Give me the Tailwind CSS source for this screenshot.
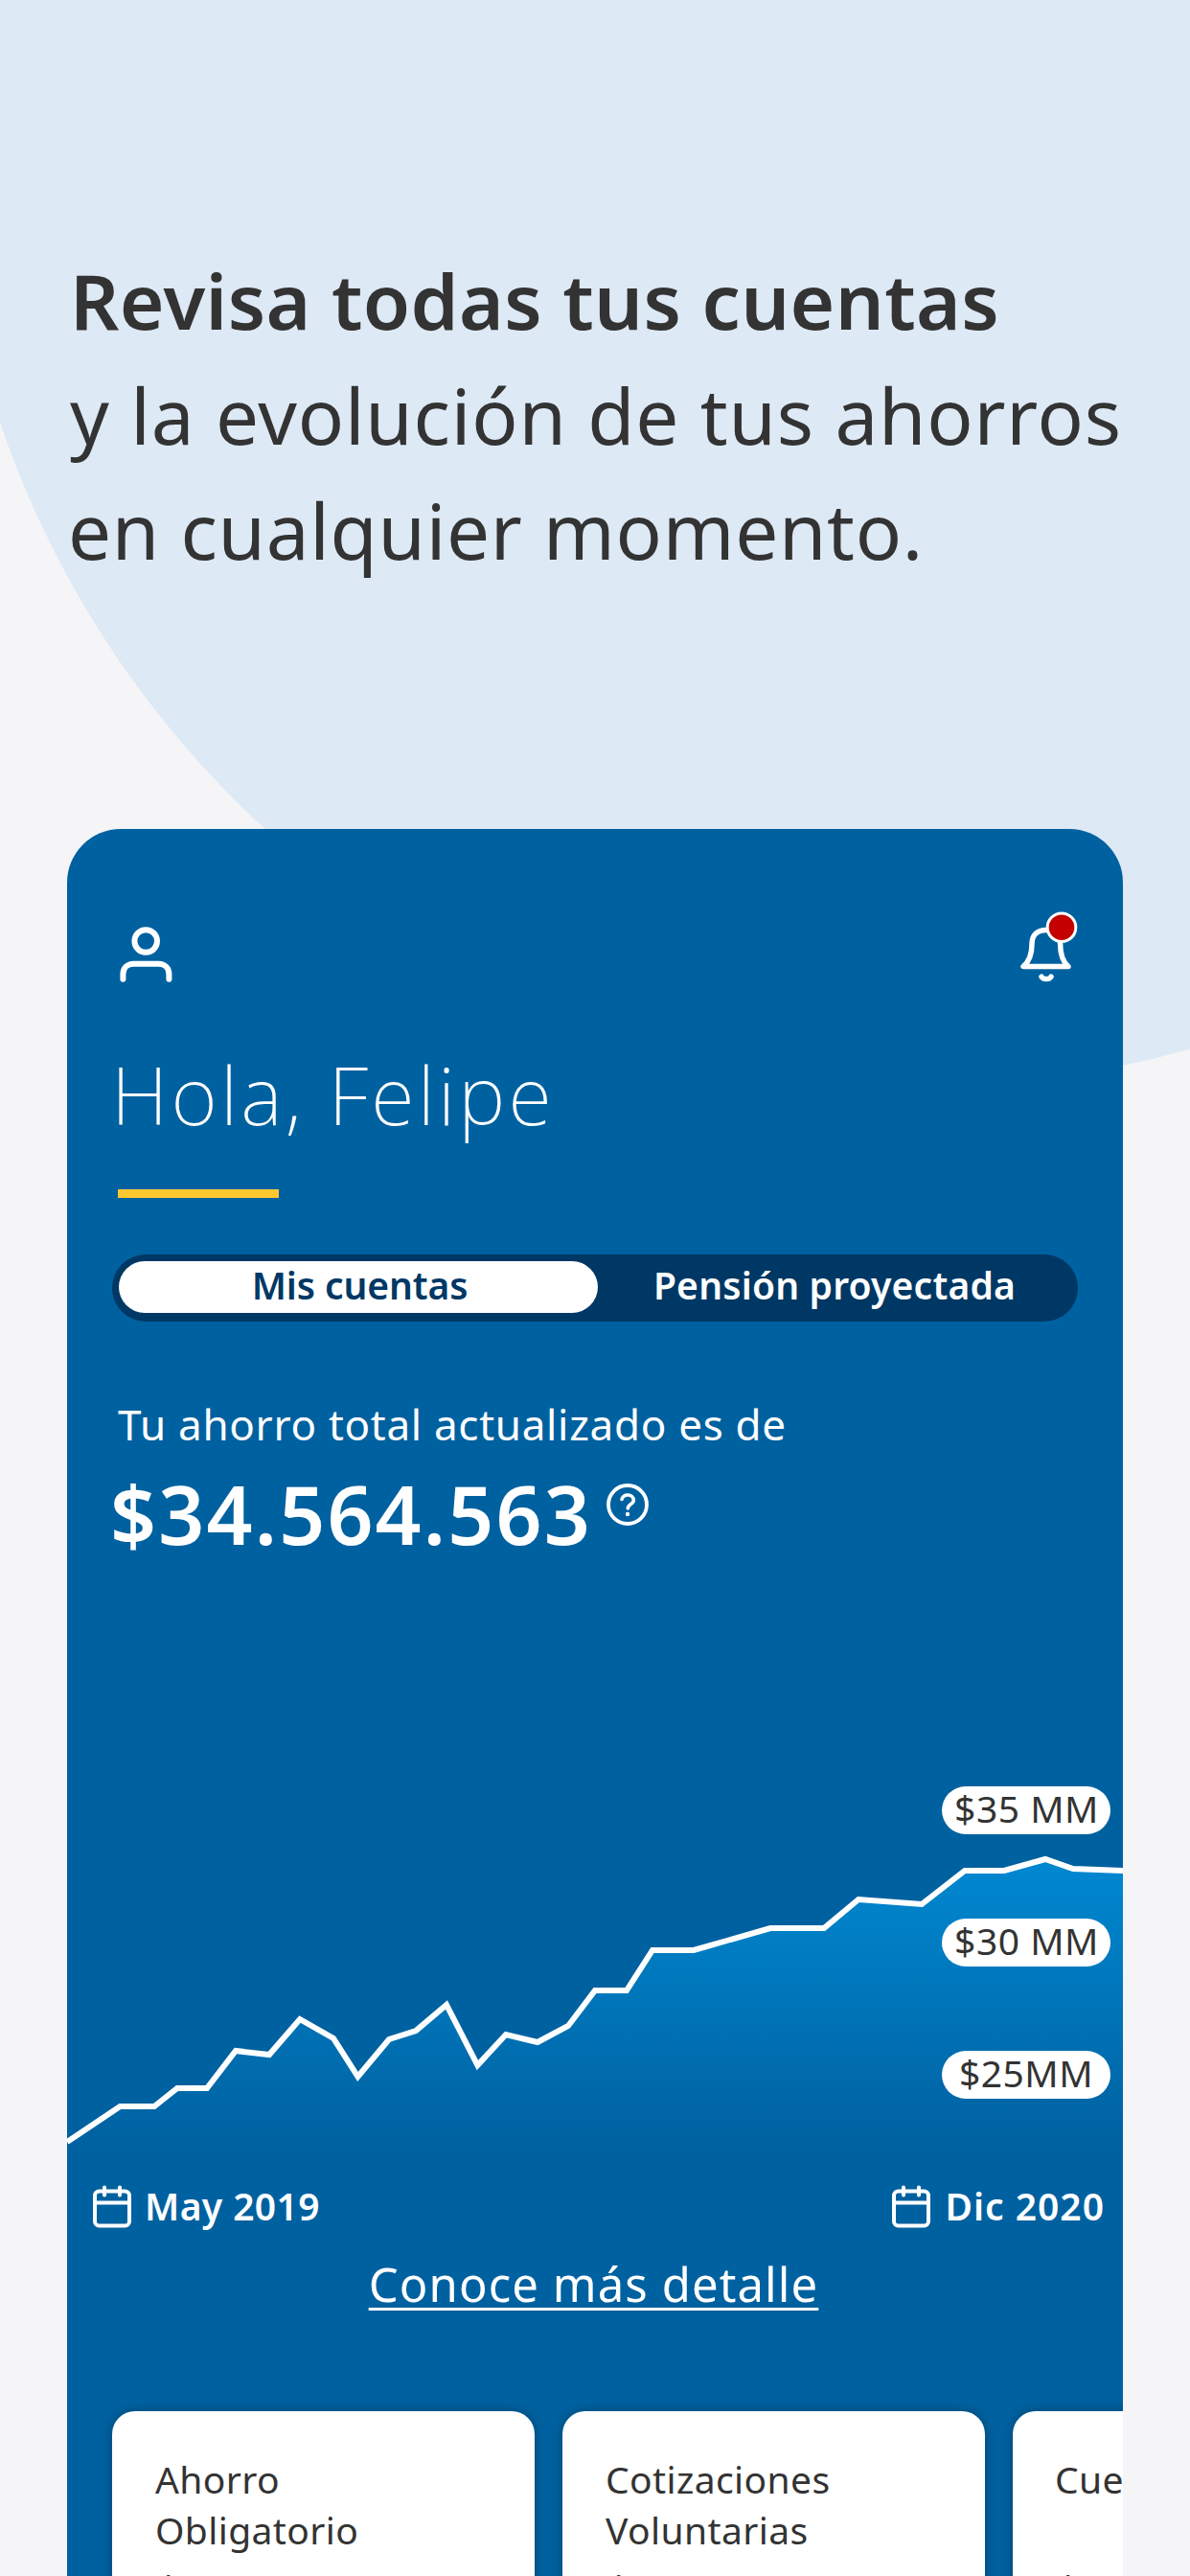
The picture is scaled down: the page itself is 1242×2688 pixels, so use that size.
<!DOCTYPE html>
<html lang="es">
<head>
    <meta charset="UTF-8">
    <meta name="viewport" content="width=device-width, initial-scale=1.0">
    <title>Mis cuentas</title>
    <script src="https://cdn.jsdelivr.net/npm/@tailwindcss/browser@4"></script>
</head>
<body class="bg-[#f5f5f7] font-['Noto_Sans',sans-serif] text-[#333333]">
    <div class="relative w-[1242px] h-[2688px] overflow-hidden flex flex-col">
        <!-- Background circle -->
        <div class="absolute left-[-54px] top-[-906px] w-[2039px] h-[2039px] rounded-full bg-[#dde9f5]"></div>

        <!-- Headline -->
        <h1 class="relative h-[865px] shrink-0 pt-[253px] pl-[71px] text-[80px] leading-[120px] whitespace-nowrap">
            <span class="block ml-[2px] font-semibold tracking-[0.4px]">Revisa todas tus cuentas</span>
            <span class="block ml-[2px] tracking-[0.8px]">y la evolución de tus ahorros</span>
            <span class="block tracking-[0.7px]">en cualquier momento.</span>
        </h1>

        <!-- App screen -->
        <main class="relative mx-[70px] flex-1 flex flex-col overflow-hidden rounded-t-[56px] bg-[#0061a0] text-white">
            <header class="flex justify-between shrink-0 pt-[84px] pl-[52px] pr-[44px] h-[226px]">
                <svg class="mt-[14px]" width="60" height="66" viewBox="0 0 60 66" fill="none" stroke="white" stroke-width="6" stroke-linecap="round" stroke-linejoin="round">
                    <circle cx="30.2" cy="19" r="11.8"/>
                    <path d="M6.4 58.7V53.7C6.4 47 11 42.700 17.400 42.700H43.400C49.800 42.700 54.400 47 54.400 53.700V58.700"/>
                </svg>
                <svg width="66" height="80" viewBox="0 0 66 80" fill="none" stroke="white" stroke-width="5.500" stroke-linecap="round" stroke-linejoin="round">
                    <path d="M29.800 21.500C20 21.500 15 27 15 36C15 46 12.500 54 6 59.500H53C46.500 54 44.600 46 44.600 36C44.600 27 39.600 21.500 29.800 21.500Z"/>
                    <path d="M25 70.200C27.200 73.400 32.800 73.400 35 70.200"/>
                    <circle cx="46" cy="18.700" r="14.800" fill="#c40000" stroke-width="3"/>
                </svg>
            </header>

            <section class="px-[47px] shrink-0">
                <h2 class="-ml-px text-[83px] leading-[101px] font-extralight tracking-[3.3px]">Hola, Felipe</h2>
                <div class="mt-[49px] ml-[6px] w-[168px] h-[9px] bg-[#fdc82f]"></div>

                <div class="mt-[59px] h-[70px] w-[1008px] p-[7px] pb-[9px] flex rounded-full bg-[#003865] text-[39px] leading-[50px] font-semibold">
                    <div class="w-[500px] h-[54px] pl-[3px] rounded-full bg-white text-[#003865] text-center tracking-[-0.1px]">Mis cuentas</div>
                    <div class="flex-1 text-center tracking-[0.2px]">Pensión proyectada</div>
                </div>

                <p class="mt-[77px] ml-[6px] text-[44px] leading-[60px] tracking-[0.7px]">Tu ahorro total actualizado es de</p>
                <div class="mt-[14px] -ml-[2px] flex gap-[15px]">
                    <span class="text-[84px] leading-[100px] font-semibold tracking-[2.2px]">$34.564.563</span>
                    <svg class="mt-[18px]" width="44" height="44" viewBox="0 0 44 44" fill="none" stroke="white" stroke-linecap="round" stroke-linejoin="round">
                        <circle cx="22" cy="22" r="20" stroke-width="3.800"/>
                        <path d="M16 16.500C17 13.300 19.500 12 22.200 12C25.700 12 28.300 14.300 28.300 17.500C28.300 21.500 22.300 21.500 22.300 26" stroke-width="3.600"/>
                        <circle cx="22" cy="32" r="2.200" fill="white" stroke="none"/>
                    </svg>
                </div>
            </section>

            <!-- Savings chart -->
            <section class="relative mt-[220px] h-[401px] shrink-0">
                <svg width="1102" height="401" viewBox="70 1850 1102 401">
                    <defs>
                        <linearGradient id="area" gradientUnits="userSpaceOnUse" x1="0" y1="1940" x2="0" y2="2240">
                            <stop offset="0" stop-color="#0088d1"/>
                            <stop offset="1" stop-color="#0061a0"/>
                        </linearGradient>
                    </defs>
                    <path fill="url(#area)" d="M70 2235L125.300 2198H161L185 2179H216L246 2140L281 2144L313 2107L348 2127L373.500 2167L406 2128L434 2119L466 2092L498.400 2155L528 2123L561 2131L593 2114L621 2077H654L681 2035H724L804 2012H860L896 1982L962 1987L1007 1952H1048L1091 1940L1120 1950L1172 1952V2251H70Z"/>
                    <path fill="none" stroke="white" stroke-width="6" d="M70 2235L125.300 2198H161L185 2179H216L246 2140L281 2144L313 2107L348 2127L373.500 2167L406 2128L434 2119L466 2092L498.400 2155L528 2123L561 2131L593 2114L621 2077H654L681 2035H724L804 2012H860L896 1982L962 1987L1007 1952H1048L1091 1940L1120 1950L1172 1952"/>
                </svg>
                <div class="absolute right-[13px] top-[14px] flex flex-col gap-[88px] text-[39px] leading-[46px] font-normal tracking-[0.5px] text-center text-[#333333]">
                    <span class="w-[176px] h-[50px] pl-px rounded-full bg-white">$35 MM</span>
                    <span class="w-[176px] h-[50px] pl-px rounded-full bg-white">$30 MM</span>
                    <span class="w-[176px] h-[50px] rounded-full bg-white">$25MM</span>
                </div>
            </section>

            <div class="mt-[26px] pl-[27px] pr-[19px] shrink-0 flex justify-between text-[39px] leading-[50px] font-semibold">
                <div class="flex gap-[14px]">
                    <svg class="mt-[3px]" width="40" height="45" viewBox="0 0 40 45" fill="none" stroke="white" stroke-width="4" stroke-linecap="round">
                        <rect x="2" y="6.500" width="36" height="36" rx="4.500"/>
                        <path d="M2 18.500H38M12 2.500V10.500M28 2.500V10.500"/>
                    </svg>
                    <span class="tracking-[0.4px]">May 2019</span>
                </div>
                <div class="flex gap-[15px]">
                    <svg class="mt-[3px]" width="40" height="45" viewBox="0 0 40 45" fill="none" stroke="white" stroke-width="4" stroke-linecap="round">
                        <rect x="2" y="6.500" width="36" height="36" rx="4.500"/>
                        <path d="M2 18.500H38M12 2.500V10.500M28 2.500V10.500"/>
                    </svg>
                    <span class="tracking-[1px]">Dic 2020</span>
                </div>
            </div>

            <a class="mt-[26px] mr-[3px] shrink-0 self-center text-[49px] leading-[60px] tracking-[1.1px] underline decoration-[3px] underline-offset-[6px]">Conoce más detalle</a>

            <!-- Accounts -->
            <section class="mt-[103px] ml-[47px] flex gap-[29px] text-[39px] leading-[53px] tracking-[0.4px] text-[#333333]">
                <article class="w-[441px] h-[300px] shrink-0 rounded-[24px] bg-white pt-[44px] pl-[45px] shadow-[0_0_12px_rgba(0,0,0,0.3)]">
                    <h3>Ahorro<br>Obligatorio</h3>
                    <p class="mt-[9px] text-[48px] leading-[60px]">$</p>
                </article>
                <article class="w-[441px] h-[300px] shrink-0 rounded-[24px] bg-white pt-[44px] pl-[45px] shadow-[0_0_12px_rgba(0,0,0,0.3)]">
                    <h3>Cotizaciones<br>Voluntarias</h3>
                    <p class="mt-[9px] text-[48px] leading-[60px]">$</p>
                </article>
                <article class="w-[441px] h-[300px] shrink-0 rounded-[24px] bg-white pt-[44px] pl-[44px] shadow-[0_0_12px_rgba(0,0,0,0.3)]">
                    <h3>Cuenta<br>&nbsp;</h3>
                    <p class="mt-[9px] text-[48px] leading-[60px]">$</p>
                </article>
            </section>
        </main>
    </div>
</body>
</html>
